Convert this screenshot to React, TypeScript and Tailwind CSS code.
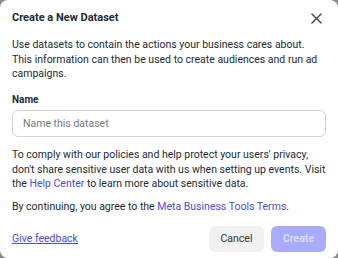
export default function App() {
  return (
    <div className="w-[338px] h-[258px] bg-[#8a8a8a] font-['Roboto',sans-serif]">
      <div className="h-full rounded-[8px] bg-white px-3 pt-[9px] text-[#1c2b33]">
        <div className="flex items-center justify-between h-[18px]">
          <h2 className="text-[11px] font-bold leading-[18px]">Create a New Dataset</h2>
          <button className="mr-[4px] text-[#444]">
            <svg width="11" height="11" viewBox="0 0 12 12" stroke="currentColor" strokeWidth="1.5" strokeLinecap="round">
              <path d="M1 1L11 11M11 1L1 11" />
            </svg>
          </button>
        </div>
        <p className="mt-[11px] text-[10.5px] leading-[14.5px]">
          Use datasets to contain the actions your business cares about. This information can then be used to create audiences and run ad campaigns.
        </p>
        <div className="mt-[11.5px] text-[10px] font-bold leading-[14px]">Name</div>
        <input
          placeholder="Name this dataset"
          className="mt-[3px] w-full h-[27px] rounded-[6px] border border-[#d4d4d4] px-[10px] text-[10.5px] placeholder-[#7a7a7a] outline-none"
        />
        <p className="mt-[11px] text-[10.5px] leading-[14.5px]">
          To comply with our policies and help protect your users' privacy, don't share sensitive user data with us when setting up events. Visit the{" "}
          <a className="text-[#4c4ddb]">Help Center</a> to learn more about sensitive data.
        </p>
        <p className="mt-[8px] text-[10.5px] leading-[14.5px]">
          By continuing, you agree to the <a className="text-[#4c4ddb]">Meta Business Tools Terms</a>.
        </p>
        <div className="mt-[12px] flex items-center justify-between">
          <a className="text-[10.5px] text-[#4c4ddb] underline">Give feedback</a>
          <div className="flex gap-[7px]">
            <button className="h-[26px] w-[55px] rounded-[6px] bg-[#f1f1f1] text-[10.5px] text-[#333]">Cancel</button>
            <button className="h-[26px] w-[55px] rounded-[6px] bg-[#aaabfa] text-[10.5px] font-bold text-[#dcdcff]">Create</button>
          </div>
        </div>
      </div>
    </div>
  );
}
